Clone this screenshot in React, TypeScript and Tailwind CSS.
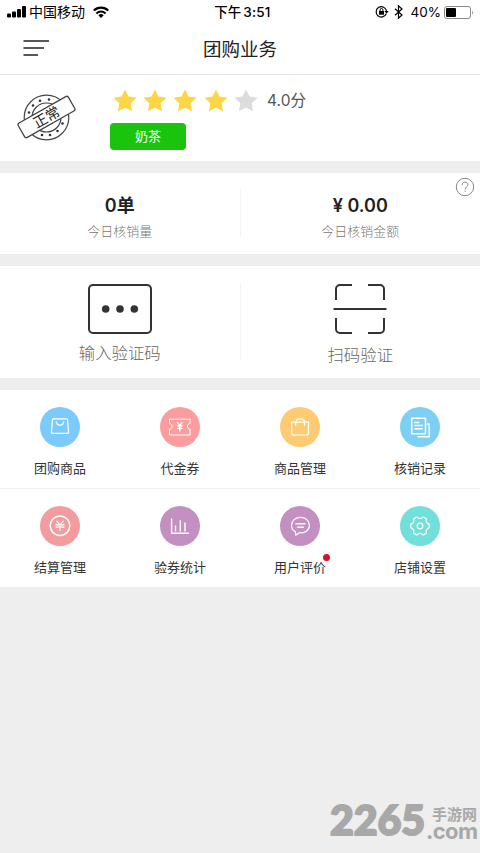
import type { ReactNode } from 'react';
import { clsx } from 'clsx';

const STAR_PATH = 'M12 .4l3.500 7.200 7.900 1.100-5.700 5.600 1.300 7.900L12 18.500 5 22.200l1.300-7.900L.6 8.700l7.900-1.100z';

interface MenuItem {
  label: string;
  color: string;
  icon: ReactNode;
  dot?: boolean;
}

function MenuIcon({ children }: { children: ReactNode }) {
  return (
    <svg className="w-10 h-10" viewBox="0 0 40 40" fill="none" stroke="#fff" strokeWidth="1.2" strokeLinejoin="round">
      {children}
    </svg>
  );
}

const menuRows: MenuItem[][] = [
  [
    {
      label: '团购商品',
      color: 'bg-[#7acbfb]',
      icon: (
        <MenuIcon>
          <path d="M13.4 11.8h13.2q.8 0 .9.8l1.1 12.6q.1 1.2-1.1 1.2h-15q-1.200 0-1.100-1.200l1.100-12.600q.1-.8.9-.8z" />
          <path d="M16.300 14.500q.3 3.700 3.700 3.700t3.700-3.700" />
        </MenuIcon>
      ),
    },
    {
      label: '代金券',
      color: 'bg-[#fb9c9e]',
      icon: (
        <MenuIcon>
          <path d="M9.500 12.200h20.600v4.200c-1.700.2-2.600 1.400-2.600 2.900s.9 2.700 2.600 2.900v5.800H9.500v-5.800c1.700-.2 2.600-1.400 2.600-2.900s-.9-2.700-2.600-2.900z" strokeWidth="1" />
          <path d="M17.200 15l2.600 3.700 2.600-3.700M19.800 18.700v5.500M17.200 19h5.200M17.200 21.300h5.200" strokeWidth="1.300" />
        </MenuIcon>
      ),
    },
    {
      label: '商品管理',
      color: 'bg-[#fecb72]',
      icon: (
        <MenuIcon>
          <path d="M11.700 15.200h16.800v10.800q0 2-2 2H13.700q-2 0-2-2z" />
          <path d="M15.700 18.800v-3.500c0-2.500 1.800-3.500 4.400-3.500s4.400 1 4.400 3.500v3.500" />
        </MenuIcon>
      ),
    },
    {
      label: '核销记录',
      color: 'bg-[#7dcff4]',
      icon: (
        <MenuIcon>
          <path d="M11.700 11.300h13.800v15.500H11.700z" strokeWidth="1.500" />
          <path d="M14.400 15.400h5M14.400 18.400h8.400M14.400 21.700h8.400M17.500 29.800h11.700V17h-2.600" strokeWidth="1.500" />
        </MenuIcon>
      ),
    },
  ],
  [
    {
      label: '结算管理',
      color: 'bg-[#f29c9f]',
      icon: (
        <MenuIcon>
          <circle cx="20" cy="19.700" r="9.800" strokeWidth="1.500" />
          <path d="M16.500 14.800l3.500 4.200 3.500-4.200M20 19v5.700M15.500 18.900h9M15.500 21.200h9" />
        </MenuIcon>
      ),
    },
    {
      label: '验券统计',
      color: 'bg-[#c390c1]',
      icon: (
        <MenuIcon>
          <path d="M11.600 12.400v14.900h17.200" strokeWidth="1.400" />
          <path d="M15.500 25.500v-6M20.300 25.500V14.300M25 25.500v-9" strokeWidth="1.400" />
        </MenuIcon>
      ),
    },
    {
      label: '用户评价',
      color: 'bg-[#c390c1]',
      dot: true,
      icon: (
        <MenuIcon>
          <path d="M15.400 25.800l.3 3.400 3.200-2.300c5.800.5 10.500-2.700 10.500-7.500s-4-8-9-8-8.900 3.400-8.900 8c0 2.800 1.500 5 3.900 6.400z" />
          <path d="M15.400 17.800h10M17.200 21.300h6.700" strokeWidth="1.400" />
        </MenuIcon>
      ),
    },
    {
      label: '店铺设置',
      color: 'bg-[#72dfda]',
      icon: (
        <MenuIcon>
          <circle cx="20" cy="20" r="2.800" />
          <path d="M16.200 11.200q.8-.4 1.300.2c1.500 1.600 3.500 1.600 5 0q.5-.6 1.300-.2l2.100 1.200q.6.4.4 1.100c-.6 2.100.5 3.900 2.300 4.400q.7.200.7 1v2.200q0 .8-.7 1c-1.800.5-2.900 2.300-2.300 4.400q.2.700-.4 1.100l-2.100 1.200q-.8.4-1.300-.2c-1.500-1.600-3.500-1.600-5 0q-.5.6-1.300.2l-2.100-1.200q-.6-.4-.4-1.100c.6-2.100-.5-3.900-2.300-4.400q-.7-.2-.7-1v-2.200q0-.8.7-1c1.800-.5 2.900-2.300 2.300-4.400q-.2-.7.4-1.100z" />
        </MenuIcon>
      ),
    },
  ],
];

function StatusBar() {
  return (
    <div className="h-6 px-[7px] grid grid-cols-3 items-center text-black text-[14px] leading-6">
      <div className="flex items-center">
        <svg className="w-[19px] h-3" viewBox="0 0 19 12">
          <rect x="0" y="7.500" width="4" height="4" rx="1" />
          <rect x="5" y="5.500" width="4" height="6" rx="1" />
          <rect x="10" y="3" width="4" height="8.500" rx="1" />
          <rect x="15" y="0" width="4" height="11.500" rx="1" />
        </svg>
        <span className="ml-[3px]">中国移动</span>
        <svg className="ml-2 w-4 h-3" viewBox="0 0 16 12" fill="none" stroke="#000" strokeWidth="2.100">
          <path d="M.8 4.500a10.400 10.400 0 0 1 14.400 0M3.400 7.400a6.600 6.600 0 0 1 9.200 0" />
          <path d="M5.300 9.200a3.900 3.900 0 0 1 5.400 0L8 12z" fill="#000" stroke="none" />
        </svg>
      </div>
      <div className="pl-[5px] text-center text-[13.500px] font-medium whitespace-nowrap">
        下午<span className="ml-[2px] tracking-[0.2px]">3:51</span>
      </div>
      <div className="flex items-center justify-end">
        <svg className="w-[14px] h-[14px]" viewBox="0 0 14 14" fill="none" stroke="#000" strokeWidth="1.200">
          <path d="M11.200 8.800A5.200 5.200 0 1 1 11.500 6" />
          <path d="M9.400 6h4.300l-2.100 2.700z" fill="#000" stroke="none" />
          <rect x="4" y="6" width="5" height="3.700" fill="#000" stroke="none" />
          <path d="M5.100 6V4.900a1.400 1.400 0 0 1 2.800 0V6" strokeWidth="1" />
        </svg>
        <svg className="ml-[5px] w-[9px] h-[14px]" viewBox="0 0 9 14" fill="none" stroke="#000" strokeWidth="1.200">
          <path d="M1 3.800l7 6.200-3.500 3.200V.8L8 4 1 10.200" />
        </svg>
        <span className="ml-[7px] text-[13.500px]">40%</span>
        <svg className="ml-[3px] w-[30px] h-[13px] -mr-[1px]" viewBox="0 0 30 13">
          <rect x=".5" y=".5" width="26" height="12" rx="2.500" fill="none" stroke="#8a8a8a" />
          <rect x="2" y="2" width="10" height="9" rx="1" />
          <path d="M28 4.500q1.800 2 0 4z" fill="#8a8a8a" />
        </svg>
      </div>
    </div>
  );
}

function Header() {
  return (
    <header className="h-[51px] px-[23px] grid grid-cols-[40px_1fr_40px] items-center border-b border-[#e8e8e8]">
      <svg className="w-[27px] h-[18px] -mt-[2px]" viewBox="0 0 27 18" stroke="#222" strokeWidth="1.500">
        <path d="M.5 2h25.500M.5 9h20.500M.5 16h14.500" />
      </svg>
      <h1 className="text-center text-[18.500px] leading-6 text-[#222]">团购业务</h1>
    </header>
  );
}

function Stamp() {
  return (
    <svg className="w-[60px] h-[50px]" viewBox="0 0 60 50" fill="none" stroke="#444" strokeWidth="1.200">
      <circle cx="30.500" cy="25.500" r="22.300" />
      <circle cx="30.500" cy="25.500" r="14.500" />
      <g fill="#333" stroke="none">
        <circle cx="13" cy="20.500" r="1.300" />
        <circle cx="17" cy="13.500" r="1.300" />
        <circle cx="24" cy="8.700" r="1.300" />
        <circle cx="33" cy="7.500" r="1.300" />
        <circle cx="26" cy="43" r="1.300" />
        <circle cx="34" cy="43" r="1.300" />
        <circle cx="41.500" cy="39" r="1.300" />
        <circle cx="46.500" cy="31.500" r="1.300" />
      </g>
      <g transform="rotate(-29.500 30.500 25)">
        <rect x="1.700" y="16.700" width="57.600" height="16.600" rx="2" fill="#fff" strokeWidth="1.300" />
        <text x="30.500" y="30.200" textAnchor="middle" fontSize="14" fill="#222" stroke="none">
          正常
        </text>
      </g>
    </svg>
  );
}

function ShopInfo() {
  return (
    <section className="h-[86px] pl-4 flex bg-white">
      <div className="pt-[17px]">
        <Stamp />
      </div>
      <div className="ml-[34px] pt-3">
        <div className="flex items-center h-7 pl-[3px]">
          {[1, 2, 3, 4, 5].map((n) => (
            <svg key={n} className="w-6 h-6 mr-[6.200px]" viewBox="0 0 24 24" fill={n <= 4 ? '#fdd545' : '#dcdcdc'}>
              <path d={STAR_PATH} />
            </svg>
          ))}
          <span className="ml-[3px] text-[15.500px] tracking-[0.1px] text-[#555]">4.0分</span>
        </div>
        <div className="mt-2 w-[76px] h-[27px] rounded-[4px] bg-[#1bc40c] text-center text-[13px] leading-[26px] text-white">奶茶</div>
      </div>
    </section>
  );
}

function Stat({ value, label }: { value: string; label: string }) {
  return (
    <div className="flex-1 flex flex-col items-center pt-[21px]">
      <div className="text-[18px] leading-6 font-semibold text-[#222]">{value}</div>
      <div className="mt-[3px] text-[13px] leading-5 font-light text-[#777]">{label}</div>
    </div>
  );
}

export default function App() {
  return (
    <div className="relative w-[480px] h-[853px] overflow-hidden bg-[#eeeeee] font-['Inter','Noto_Sans_CJK_SC',sans-serif]">
      <div className="bg-white">
        <StatusBar />
        <Header />
      </div>
      <ShopInfo />

      {/* Today's figures */}
      <section className="relative mt-3 h-[81px] flex bg-white">
        <Stat value="0单" label="今日核销量" />
        <div className="w-px h-12 mt-4 bg-[#f5f5f5]" />
        <Stat value="¥ 0.00" label="今日核销金额" />
        <svg className="absolute right-[5px] top-1 w-5 h-5" viewBox="0 0 20 20" fill="none" stroke="#888">
          <circle cx="10" cy="10" r="8.700" />
          <path d="M7.200 8.100c0-1.900 1.100-3 2.800-3s2.900 1 2.900 2.700c0 2.100-2.800 2.300-2.800 4.600M10.100 13.600v1.300" />
        </svg>
      </section>

      {/* Verification */}
      <section className="mt-3 h-28 flex bg-white">
        <div className="flex-1 flex flex-col items-center pt-[18px]">
          <svg className="w-16 h-[50px]" viewBox="0 0 64 50" fill="none" stroke="#333" strokeWidth="2">
            <rect x="1" y="1" width="62" height="48" rx="4" />
            <g fill="#333" stroke="none">
              <circle cx="17.700" cy="25" r="3.800" />
              <circle cx="32" cy="25" r="3.800" />
              <circle cx="46.300" cy="25" r="3.800" />
            </g>
          </svg>
          <span className="mt-[7px] text-[16.400px] leading-6 font-light text-[#666]">输入验证码</span>
        </div>
        <div className="w-px h-[78px] mt-[17px] bg-[#f5f5f5]" />
        <div className="flex-1 flex flex-col items-center pt-[18px]">
          <svg className="w-[54px] h-[50px]" viewBox="0 0 54 50" fill="none" stroke="#333" strokeWidth="2">
            <path d="M3 16V5a4 4 0 0 1 4-4h12M35 1h12a4 4 0 0 1 4 4v11M51 34v11a4 4 0 0 1-4 4H35M19 49H7a4 4 0 0 1-4-4V34M.5 25h53" />
          </svg>
          <span className="mt-[9px] text-[16.400px] leading-6 font-light text-[#666]">扫码验证</span>
        </div>
      </section>

      {/* Function menu */}
      <section className="mt-3 bg-white">
        {menuRows.map((row, i) => (
          <div key={i} className={clsx('grid grid-cols-4', i === 0 ? 'h-[99px] border-b border-[#f0f0f0]' : 'h-[98px]')}>
            {row.map((item) => (
              <div key={item.label} className="flex flex-col items-center pt-[17px]">
                <div className={clsx('w-10 h-10 rounded-full', item.color)}>{item.icon}</div>
                <div className="relative mt-[11px] text-[13px] leading-5 text-[#333]">
                  {item.label}
                  {item.dot && <span className="absolute -right-1 -top-[3px] w-[7px] h-[7px] rounded-full bg-[#d8102a]" />}
                </div>
              </div>
            ))}
          </div>
        ))}
      </section>

      {/* Site mark laid over the page corner */}
      <div className="absolute left-[330px] bottom-[12px] flex items-end text-[#a8a8a8]">
        <div className="w-24 mb-[2px] text-[41px] leading-[38px] font-black [-webkit-text-stroke:2px_#a8a8a8] font-['Lato','Inter',sans-serif]">2265</div>
        <div className="flex flex-col">
          <span className="pl-[6px] text-[15px] leading-[15px] font-bold">手游网</span>
          <span className="text-[22px] leading-[19px] font-bold tracking-[-0.6px]">.com</span>
        </div>
      </div>
    </div>
  );
}
